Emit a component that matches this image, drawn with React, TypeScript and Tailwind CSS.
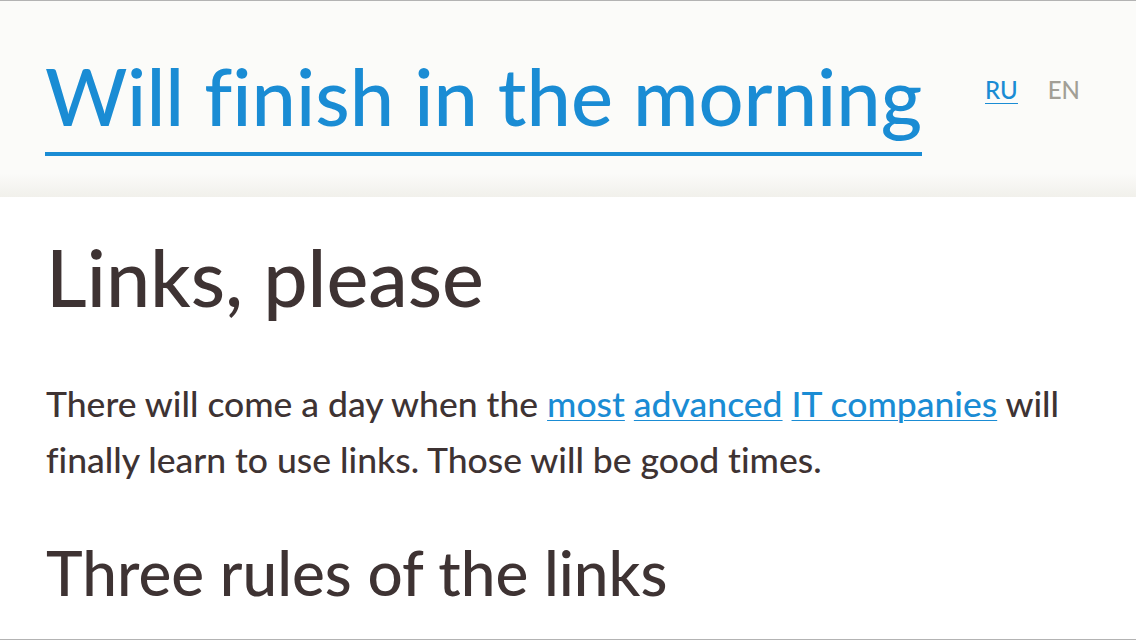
import React from "react";

export default function App() {
  return (
    <div className="flex h-[640px] w-full flex-col overflow-hidden border-y border-[#b3b3b3] bg-white font-['Lato',sans-serif] font-medium text-[#3e3333] [font-variant-ligatures:none]">
      <header className="flex h-[196px] shrink-0 items-start bg-[linear-gradient(to_bottom,#fbfbf9_88%,#f1f0eb)] pl-[45px] pr-[56px] pt-[55px]">
        <a
          href="#"
          className="inline-block border-b-4 border-[#1a8cd4] pb-[16px] text-[79.3px] leading-[80px] text-[#1a8cd4]"
        >
          Will finish in the morning
        </a>
        <nav className="ml-auto mt-[22px] flex gap-[30px] text-[24px] leading-none">
          <a href="#" className="inline-block border-b border-[#1a8cd4] pb-px text-[#1a8cd4]">
            RU
          </a>
          <span className="text-[#a29f96]">EN</span>
        </nav>
      </header>
      <main className="flex flex-col pl-[46px] pr-[46px] pt-[41px]">
        <h1 className="text-[79px] leading-[78px]">Links, please</h1>
        <p className="mt-[60px] text-[35.5px] leading-[56px]">
          There will come a day when the{" "}
          <a href="#" className="text-[#1a8cd4] underline decoration-1 underline-offset-[3px]">
            most
          </a>{" "}
          <a href="#" className="text-[#1a8cd4] underline decoration-1 underline-offset-[3px]">
            advanced
          </a>{" "}
          <a href="#" className="text-[#1a8cd4] underline decoration-1 underline-offset-[3px]">
            IT companies
          </a>{" "}
          will finally learn to use links. Those will be good times.
        </p>
        <h2 className="mt-[53px] text-[62px] leading-none">Three rules of the links</h2>
      </main>
    </div>
  );
}
